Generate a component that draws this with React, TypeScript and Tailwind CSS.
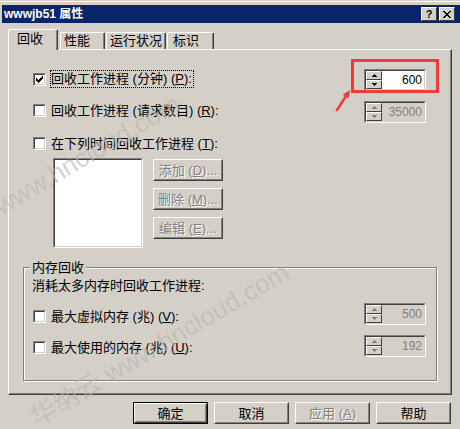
import React from "react"

const face = "bg-[#d4d0c8]"

function Check({ checked = false }: { checked?: boolean }) {
  return (
    <div className="w-[13px] h-[13px] shrink-0 border border-t-[#808080] border-l-[#808080] border-r-white border-b-white">
      <div className="w-full h-full bg-white border border-t-[#404040] border-l-[#404040] border-r-[#d4d0c8] border-b-[#d4d0c8] flex items-center justify-center">
        {checked && (
          <svg width="7" height="7" viewBox="0 0 7 7" shapeRendering="crispEdges">
            <polygon points="0,2 2,4 7,-1 7,2 2,7 0,5" fill="#000" />
          </svg>
        )}
      </div>
    </div>
  )
}

function Arrow({ up, enabled }: { up?: boolean; enabled: boolean }) {
  const c = enabled ? "#000" : "#808080"
  return (
    <svg width="5" height="3" viewBox="0 0 5 3" shapeRendering="crispEdges">
      {up ? <polygon points="2.5,0 5,3 0,3" fill={c} /> : <polygon points="0,0 5,0 2.5,3" fill={c} />}
    </svg>
  )
}

function SpinBtn({ up, enabled }: { up?: boolean; enabled: boolean }) {
  return (
    <div className="h-[9px] w-full bg-[#d4d0c8] border border-t-white border-l-white border-r-[#404040] border-b-[#404040] flex items-center justify-center">
      <Arrow up={up} enabled={enabled} />
    </div>
  )
}

function Spin({ value, enabled = false }: { value: string; enabled?: boolean }) {
  return (
    <div className="w-[62px] h-[22px] shrink-0 border border-t-[#808080] border-l-[#808080] border-r-white border-b-white">
      <div
        className={`h-full flex border border-t-[#404040] border-l-[#404040] border-r-[#d4d0c8] border-b-[#d4d0c8] ${
          enabled ? "bg-white" : "bg-[#d4d0c8]"
        }`}
      >
        <div className="w-[16px] flex flex-col">
          <SpinBtn up enabled={enabled} />
          <SpinBtn enabled={enabled} />
        </div>
        <div
          className={`flex-1 flex items-center justify-end pr-[2px] text-[12px] leading-[14px] ${
            enabled ? "text-black" : "text-[#808080]"
          }`}
        >
          {value}
        </div>
      </div>
    </div>
  )
}

function Btn({
  children,
  def = false,
  disabled = false,
  className = "",
}: {
  children: React.ReactNode
  def?: boolean
  disabled?: boolean
  className?: string
}) {
  return (
    <div className={`${className} ${def ? "border border-black" : ""} shrink-0`}>
      <div className="w-full h-full border border-t-white border-l-white border-r-[#404040] border-b-[#404040]">
        <div
          className={`w-full h-full flex items-center justify-center border border-transparent border-r-[#808080] border-b-[#808080] text-[13px] leading-[15px] ${
            disabled ? "text-[#808080] [text-shadow:1px_1px_0_#fff]" : "text-black"
          }`}
        >
          {children}
        </div>
      </div>
    </div>
  )
}

const tabs = [
  { label: "性能", w: "w-[45px] ml-[2px] pl-[3px]" },
  { label: "运行状况", w: "w-[60px] ml-[1px] pl-[3px]" },
  { label: "标识", w: "w-[47px] ml-[1px] pl-[5px]" },
]

export default function App() {
  return (
    <div
      className={`relative w-[460px] h-[429px] overflow-hidden ${face} text-black font-['Liberation_Sans','Noto_Sans_CJK_SC',sans-serif]`}
    >
      {/* window frame top */}
      <div className="h-[5px] border-t border-t-[#d4d0c8]">
        <div className="h-px bg-white" />
      </div>

      {/* title bar */}
      <div className="ml-[2px] h-[18px] bg-[#0a246a] flex items-center justify-between pl-[2px] pr-[5px]">
        <span className="text-white font-bold text-[12px] leading-[14px]">wwwjb51 属性</span>
        <div className="flex gap-[2px]">
          <div className="w-[16px] h-[14px] bg-[#d4d0c8] border border-t-white border-l-white border-r-[#404040] border-b-[#404040] flex items-center justify-center">
            <span className="font-bold text-[11px] leading-[11px]">?</span>
          </div>
          <div className="w-[16px] h-[14px] bg-[#d4d0c8] border border-t-white border-l-white border-r-[#404040] border-b-[#404040] flex items-center justify-center">
            <svg width="8" height="7" viewBox="0 0 8 7" shapeRendering="crispEdges">
              <path d="M0 0h2l2 2.5L6 0h2L5 3.5 8 7H6L4 4.5 2 7H0l3-3.5z" fill="#000" />
            </svg>
          </div>
        </div>
      </div>

      {/* tabs */}
      <div className="h-[26px] flex items-end pl-[8px] text-[13px] leading-[15px]">
        <div className="relative z-10 -mb-px w-[50px] h-[21px] bg-[#d4d0c8] border-l border-t border-r border-l-white border-t-white border-r-[#404040] rounded-t-[2px] shadow-[inset_-1px_0_0_#808080] pl-[8px] pt-[1px]">
          回收
        </div>
        {tabs.map((t) => (
          <div
            key={t.label}
            className={`${t.w} h-[17px] whitespace-nowrap border-l border-t border-r border-l-white border-t-white border-r-[#404040] rounded-t-[2px] shadow-[inset_-1px_0_0_#808080]`}
          >
            {t.label}
          </div>
        ))}
      </div>

      {/* tab panel */}
      <div className="ml-[8px] w-[444px] h-[346px] border border-l-white border-t-white border-r-[#404040] border-b-[#404040] shadow-[inset_-1px_-1px_0_#808080] text-[13px] leading-[15px]">
        <div className="pl-[24px] pr-[25px]">
          <div className="mt-[19px] h-[22px] flex justify-between items-start">
            <div className="flex items-start">
              <div className="mt-[4px]">
                <Check checked />
              </div>
              <span className="ml-[4px] mt-[1px] border border-dotted border-black leading-[16px] pr-[1px]">
                回收工作进程 (分钟) (<u>P</u>):
              </span>
            </div>
            <Spin value="600" enabled />
          </div>

          <div className="mt-[10px] h-[22px] flex justify-between items-start">
            <div className="flex items-center mt-[2px]">
              <Check />
              <span className="ml-[5px]">
                回收工作进程 (请求数目) (<u>R</u>):
              </span>
            </div>
            <Spin value="35000" />
          </div>

          <div className="mt-[14px] h-[13px] flex items-center">
            <Check />
            <span className="ml-[5px]">
              在下列时间回收工作进程 (<u>T</u>):
            </span>
          </div>

          <div className="mt-[8px] ml-[20px] flex items-start">
            <div className="w-[90px] h-[90px] border border-t-[#808080] border-l-[#808080] border-r-white border-b-white">
              <div className="w-full h-full bg-white border border-t-[#404040] border-l-[#404040] border-r-[#d4d0c8] border-b-[#d4d0c8]" />
            </div>
            <div className="ml-[10px] mt-[1px] flex flex-col gap-[7px]">
              <Btn disabled className="w-[70px] h-[22px]">
                添加 (<u>D</u>)...
              </Btn>
              <Btn disabled className="w-[70px] h-[22px]">
                删除 (<u>M</u>)...
              </Btn>
              <Btn disabled className="w-[70px] h-[22px]">
                编辑 (<u>E</u>)...
              </Btn>
            </div>
          </div>
        </div>

        <fieldset className="mt-[12px] ml-[14px] w-[414px] border border-[#808080] shadow-[inset_1px_1px_0_#fff,1px_1px_0_#fff] pl-[8px] pr-[10px] pt-[3px] pb-[23px]">
          <legend className="-ml-[2px] px-[2px] bg-[#d4d0c8] leading-[15px]">内存回收</legend>
          <div>消耗太多内存时回收工作进程:</div>

          <div className="mt-[10px] h-[22px] flex justify-between items-start">
            <div className="ml-[1px] mt-[6px] flex items-center">
              <Check />
              <span className="ml-[5px]">
                最大虚拟内存 (兆) (<u>V</u>):
              </span>
            </div>
            <Spin value="500" />
          </div>

          <div className="mt-[10px] h-[22px] flex justify-between items-start">
            <div className="ml-[1px] mt-[5px] flex items-center">
              <Check />
              <span className="ml-[5px]">
                最大使用的内存 (兆) (<u>U</u>):
              </span>
            </div>
            <Spin value="192" />
          </div>
        </fieldset>
      </div>

      {/* dialog buttons */}
      <div className="mt-[7px] pr-[9px] flex justify-end gap-[6px]">
        <Btn def className="w-[75px] h-[22px]">
          确定
        </Btn>
        <Btn className="w-[75px] h-[22px]">取消</Btn>
        <Btn disabled className="w-[75px] h-[22px]">
          应用 (<u>A</u>)
        </Btn>
        <Btn className="w-[75px] h-[22px]">帮助</Btn>
      </div>

      {/* red highlight annotation */}
      <div className="absolute left-[351px] top-[59px] w-[88px] h-[34px] border-[3px] border-[#f03c3c]" />
      <svg className="absolute left-[333px] top-[86px]" width="22" height="28" viewBox="0 0 22 28">
        <path d="M4 24 L12.6 10.7" stroke="#f03c3c" strokeWidth="2.5" strokeLinecap="round" />
        <polygon points="17,4 15.5,12.6 9.7,8.8" fill="#f03c3c" />
      </svg>

      {/* watermarks */}
      <span className="pointer-events-none absolute left-[-69px] top-[234px] h-[30px] leading-[30px] text-[26px] whitespace-nowrap text-[#b9b6af]/60 origin-bottom-left rotate-[-30.5deg]">
        华纳云 www.hncloud.com
      </span>
      <span className="pointer-events-none absolute left-[40px] top-[402px] h-[30px] leading-[30px] text-[26px] whitespace-nowrap text-[#b9b6af]/60 origin-bottom-left rotate-[-30.5deg]">
        华纳云 www.hncloud.com
      </span>
    </div>
  )
}
